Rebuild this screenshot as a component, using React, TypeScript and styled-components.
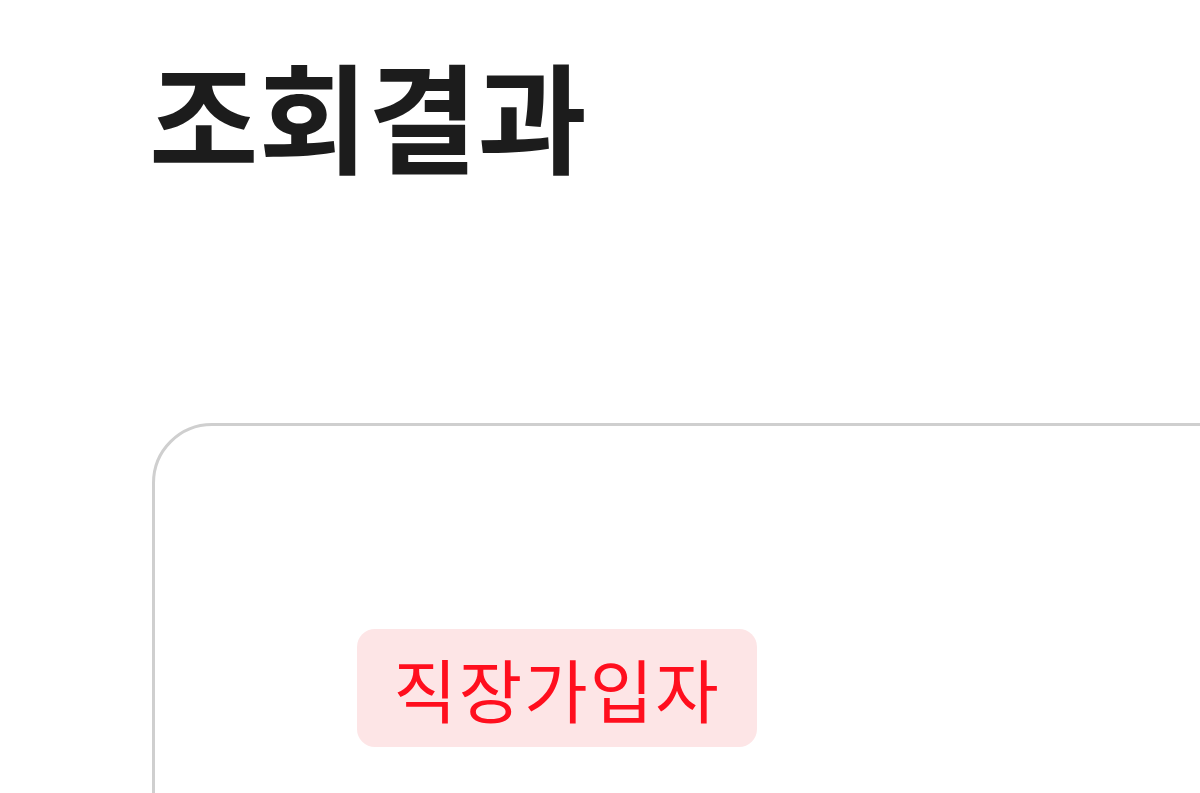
import React from 'react';
import styled, { createGlobalStyle } from 'styled-components';

const GlobalStyle = createGlobalStyle`
  html, body {
    margin: 0;
    padding: 0;
    background: #ffffff;
    overflow: hidden;
  }
  body {
    font-family: "Noto Sans CJK KR", "Noto Sans", sans-serif;
  }
`;

const Page = styled.main`
  width: 1200px;
  height: 793px;
  padding: 36px 0 0 149px;
  box-sizing: border-box;
`;

const Title = styled.h1`
  margin: 0;
  font-size: 119px;
  font-weight: 700;
  line-height: 1.3;
  color: #1c1c1c;
  letter-spacing: 0;
`;

const ResultCard = styled.section`
  margin-top: 232px;
  margin-left: 3px;
  width: 1400px;
  height: 600px;
  border: 3px solid #cfcfcf;
  border-radius: 60px;
  padding: 203px 0 0 202px;
  box-sizing: border-box;
`;

const Badge = styled.span<{ $tone: 'red' | 'blue' }>`
  display: inline-flex;
  align-items: center;
  justify-content: center;
  width: 400px;
  height: 118px;
  border-radius: 18px;
  font-size: 69px;
  font-weight: 400;
  letter-spacing: 2px;
  background: ${p => (p.$tone === 'red' ? '#fde5e6' : '#e5efff')};
  color: ${p => (p.$tone === 'red' ? '#ff0f1e' : '#1f5fff')};
`;

export default function App() {
  return (
    <>
      <GlobalStyle />
      <Page>
        <Title>조회결과</Title>
        <ResultCard>
          <Badge $tone="red">직장가입자</Badge>
        </ResultCard>
      </Page>
    </>
  );
}
